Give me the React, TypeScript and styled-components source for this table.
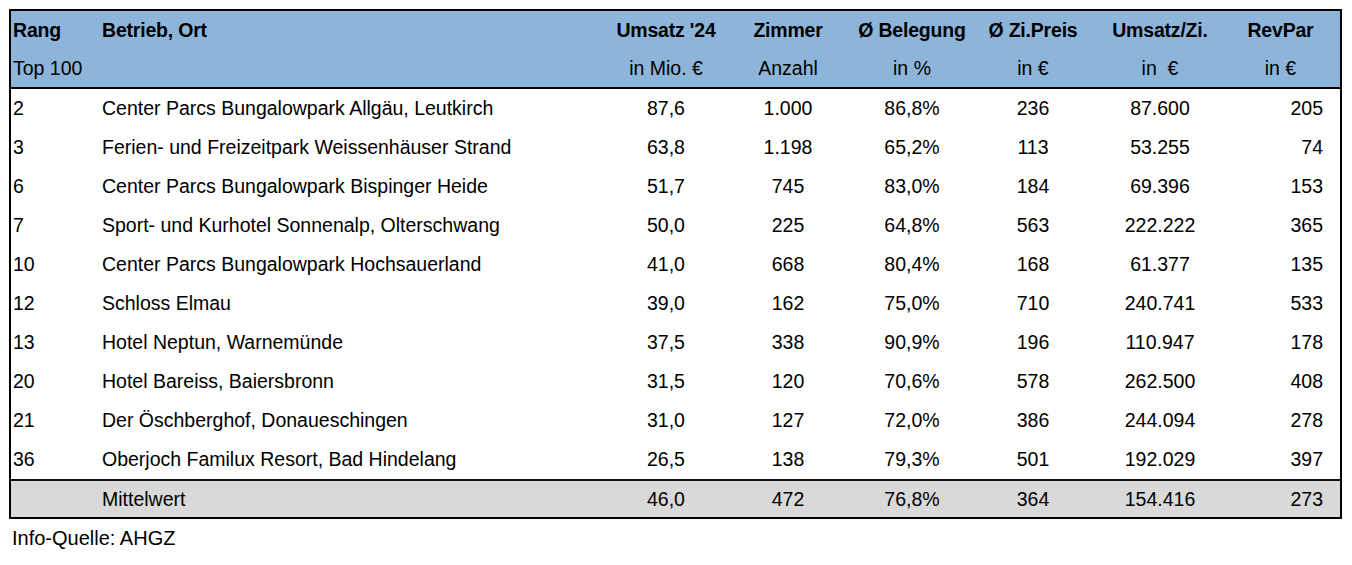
import React from 'react';
import styled, { createGlobalStyle } from 'styled-components';

type Align = 'left' | 'center' | 'right';

interface Column {
  title: string;
  unit: string;
  headAlign: Align;
  bodyAlign: Align;
}

const columns: Column[] = [
  { title: 'Rang', unit: 'Top 100', headAlign: 'left', bodyAlign: 'left' },
  { title: 'Betrieb, Ort', unit: '', headAlign: 'left', bodyAlign: 'left' },
  { title: "Umsatz '24", unit: 'in Mio. €', headAlign: 'center', bodyAlign: 'center' },
  { title: 'Zimmer', unit: 'Anzahl', headAlign: 'center', bodyAlign: 'center' },
  { title: 'Ø Belegung', unit: 'in %', headAlign: 'center', bodyAlign: 'center' },
  { title: 'Ø Zi.Preis', unit: 'in €', headAlign: 'center', bodyAlign: 'center' },
  { title: 'Umsatz/Zi.', unit: 'in  €', headAlign: 'center', bodyAlign: 'center' },
  { title: 'RevPar', unit: 'in €', headAlign: 'center', bodyAlign: 'right' },
];

const rows: string[][] = [
  ['2', 'Center Parcs Bungalowpark Allgäu, Leutkirch', '87,6', '1.000', '86,8%', '236', '87.600', '205'],
  ['3', 'Ferien- und Freizeitpark Weissenhäuser Strand', '63,8', '1.198', '65,2%', '113', '53.255', '74'],
  ['6', 'Center Parcs Bungalowpark Bispinger Heide', '51,7', '745', '83,0%', '184', '69.396', '153'],
  ['7', 'Sport- und Kurhotel Sonnenalp, Olterschwang', '50,0', '225', '64,8%', '563', '222.222', '365'],
  ['10', 'Center Parcs Bungalowpark Hochsauerland', '41,0', '668', '80,4%', '168', '61.377', '135'],
  ['12', 'Schloss Elmau', '39,0', '162', '75,0%', '710', '240.741', '533'],
  ['13', 'Hotel Neptun, Warnemünde', '37,5', '338', '90,9%', '196', '110.947', '178'],
  ['20', 'Hotel Bareiss, Baiersbronn', '31,5', '120', '70,6%', '578', '262.500', '408'],
  ['21', 'Der Öschberghof, Donaueschingen', '31,0', '127', '72,0%', '386', '244.094', '278'],
  ['36', 'Oberjoch Familux Resort, Bad Hindelang', '26,5', '138', '79,3%', '501', '192.029', '397'],
];

const average = ['', 'Mittelwert', '46,0', '472', '76,8%', '364', '154.416', '273'];

const GlobalStyle = createGlobalStyle`
  html, body {
    margin: 0;
    padding: 0;
    background: #ffffff;
  }

  body {
    font-family: "Liberation Sans", Arial, sans-serif;
    color: #000000;
  }
`;

const Page = styled.div`
  padding: 9px 0 0 9px;
`;

const Frame = styled.div`
  box-sizing: border-box;
  width: 1333px;
  border: 2px solid #000000;
`;

const Header = styled.div`
  background-color: #8db5d9;
  border-bottom: 2px solid #000000;
`;

const Row = styled.div<{ $height: number }>`
  display: grid;
  grid-template-columns: 89px 500px 132px 112px 136px 106px 148px 1fr;
  height: ${(p) => p.$height}px;
  align-items: center;
  font-size: 19.5px;
`;

const AverageRow = styled(Row)`
  background-color: #d9d9d9;
  border-top: 2px solid #111111;
`;

const Cell = styled.div<{ $align: Align; $bold?: boolean; $last?: boolean }>`
  text-align: ${(p) => p.$align};
  font-weight: ${(p) => (p.$bold ? 700 : 400)};
  white-space: pre;
  padding-left: ${(p) => (p.$align === 'left' ? 2 : 0)}px;
  padding-right: ${(p) => (p.$last ? (p.$align === 'right' ? 17 : 13) : 0)}px;
  letter-spacing: ${(p) => (p.$bold ? '-0.2px' : '0')};
`;

const Source = styled.div`
  margin: 8px 0 0 3px;
  font-size: 20px;
  line-height: 23px;
`;

const lastIndex = columns.length - 1;

const App: React.FC = () => {
  return (
    <Page>
      <GlobalStyle />
      <Frame>
        <Header>
          <Row $height={38}>
            {columns.map((c, i) => (
              <Cell key={c.title} $align={c.headAlign} $bold $last={i === lastIndex}>
                {c.title}
              </Cell>
            ))}
          </Row>
          <Row $height={38}>
            {columns.map((c, i) => (
              <Cell key={c.title} $align={c.headAlign} $last={i === lastIndex}>
                {c.unit}
              </Cell>
            ))}
          </Row>
        </Header>

        {rows.map((r) => (
          <Row key={r[0]} $height={39}>
            {r.map((v, i) => (
              <Cell key={i} $align={columns[i].bodyAlign} $last={i === lastIndex}>
                {v}
              </Cell>
            ))}
          </Row>
        ))}

        <AverageRow $height={36}>
          {average.map((v, i) => (
            <Cell key={i} $align={columns[i].bodyAlign} $last={i === lastIndex}>
              {v}
            </Cell>
          ))}
        </AverageRow>
      </Frame>
      <Source>Info-Quelle: AHGZ</Source>
    </Page>
  );
};

export default App;
